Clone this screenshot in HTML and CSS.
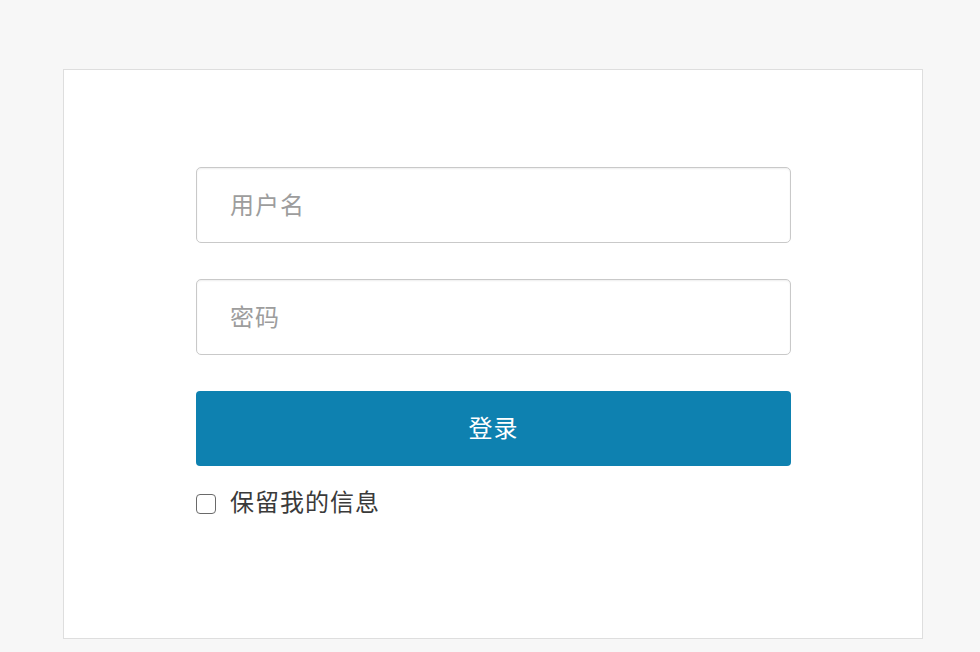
FILE: index.html
```html
<!DOCTYPE html>
<html lang="zh-CN">
<head>
<meta charset="utf-8">
<title>登录</title>
<link rel="stylesheet" href="styles.css">
</head>
<body>
<div class="card">
  <form class="form">
    <input class="field" type="text" placeholder="用户名">
    <input class="field" type="password" placeholder="密码">
    <button class="btn" type="button">登录</button>
    <label class="remember">
      <span class="box"></span>
      <span class="remember-text">保留我的信息</span>
    </label>
  </form>
</div>
</body>
</html>
```

FILE: styles.css
```css
* { box-sizing: border-box; }
html, body {
  margin: 0;
  padding: 0;
  background: #f7f7f7;
  font-family: "Noto Sans CJK SC", "Noto Sans", sans-serif;
}
body {
  padding: 69px 0 0 63px;
}
.card {
  width: 860px;
  height: 570px;
  background: #ffffff;
  border: 1px solid #dedede;
  padding-top: 97px;
}
.form {
  width: 595px;
  margin-left: 132px;
  display: flex;
  flex-direction: column;
}
.field {
  height: 76px;
  border: 1px solid #c9c9c9;
  border-radius: 5px;
  box-shadow: inset 0 1px 2px rgba(0,0,0,0.07);
  padding: 0 0 4px 33px;
  font-family: inherit;
  font-size: 24px;
  letter-spacing: 1px;
  color: #555;
  outline: none;
  margin-bottom: 36px;
  background: #fff;
}
.field::placeholder {
  color: #9d9d9d;
}
.btn {
  height: 75px;
  border: none;
  border-radius: 4px;
  background: #0e81b0;
  color: #ffffff;
  font-family: inherit;
  font-size: 24px;
  letter-spacing: 1px;
  padding: 0 0 5px 0;
  cursor: pointer;
}
.remember {
  display: flex;
  align-items: flex-start;
  gap: 14px;
  margin-top: 22px;
  color: #3a3a3a;
  font-size: 24px;
  line-height: 26px;
  letter-spacing: 1px;
}
.box {
  width: 20px;
  height: 20px;
  margin-top: 6px;
  border: 1px solid #6a6a6a;
  border-radius: 4px;
  background: #fff;
  flex: none;
}
.remember-text {
  display: block;
}
```
